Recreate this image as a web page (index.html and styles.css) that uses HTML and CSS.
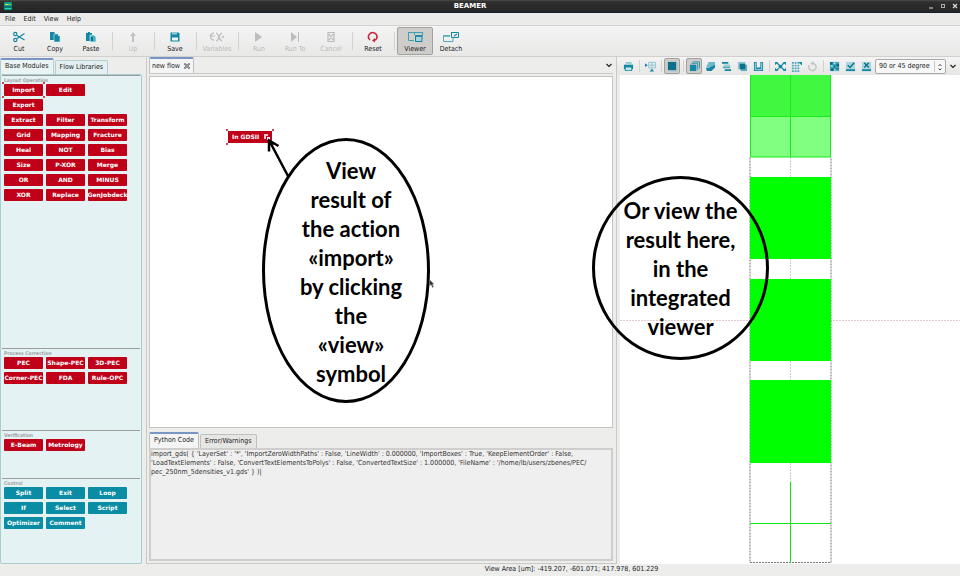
FILE: index.html
```html
<!DOCTYPE html>
<html lang="en">
<head>
<meta charset="utf-8">
<title>BEAMER</title>
<link rel="stylesheet" href="styles.css">
</head>
<body>
<div class="app">
  <header class="titlebar">
    <svg class="logo" viewBox="0 0 8 8"><rect width="8" height="8" rx="1" fill="#0a9a86"/><path d="M1 2h3v1H1z" fill="#e8e23c"/><path d="M4 2h3v1H4z" fill="#7ad04a"/><path d="M0 4.500h8v1H0z" fill="#0b4f5c"/><path d="M1 6h6v1H1z" fill="#2fd0c0"/></svg>
    <h1>BEAMER</h1>
    <div class="winbtns">
      <button aria-label="Minimize"><svg viewBox="0 0 6 6"><path d="M1 5h4" stroke="#ddd" stroke-width="1"/></svg></button>
      <button aria-label="Maximize"><svg viewBox="0 0 6 6"><rect x="1.500" y="1.500" width="3" height="3" fill="none" stroke="#aaa"/></svg></button>
      <button aria-label="Close"><svg viewBox="0 0 6 6"><path d="M1 1l4 4M5 1L1 5" stroke="#ddd" stroke-width="1.200"/></svg></button>
    </div>
  </header>
  <nav class="menubar"><button>File</button><button>Edit</button><button>View</button><button>Help</button></nav>
  <div class="toolbar">
    <button class="tool"><svg viewBox="0 0 12 12" fill="none" stroke="#1387a3" stroke-width="1.200"><path d="M11.500 2.500L4 7.500M11.500 9L4 4.500"/><circle cx="2.300" cy="3" r="1.600"/><circle cx="2.300" cy="9" r="1.600"/></svg>Cut</button>
    <button class="tool"><svg viewBox="0 0 12 12"><path d="M1 1h4l1 1v7H1z" fill="#1387a3"/><path d="M5 3h4l2 2v6H5z" fill="#1387a3" stroke="#d7ecf0" stroke-width=".6"/><path d="M9 3v2h2" fill="#d7ecf0"/></svg>Copy</button>
    <button class="tool"><svg viewBox="0 0 12 12"><path d="M1 2h2V1h2v1h2v8H1z" fill="#1387a3"/><path d="M5 4h4l2 2v5H5z" fill="#4bb4c8" stroke="#e8f4f6" stroke-width=".6"/><path d="M6 6h2v4H6z" fill="#0b6f88"/></svg>Paste</button>
    <span class="sep"></span>
    <button class="tool" disabled><svg viewBox="0 0 12 12"><path d="M6 1l3 4H7v6H5V5H3z" fill="#c2c2c2"/></svg>Up</button>
    <span class="sep"></span>
    <button class="tool"><svg viewBox="0 0 12 12"><path d="M1.500 1.500h8l1 1v8h-9z" fill="#1387a3"/><path d="M3 1.500h5v2H3z" fill="#8ed0dc"/><path d="M3 6.500h6v3H3z" fill="#f0f7f8"/></svg>Save</button>
    <span class="sep"></span>
    <button class="tool" disabled><svg class="wide" viewBox="0 0 16 12" fill="none" stroke="#bbb" stroke-width="1.200"><path d="M5 2a3 3 0 1 0 0 7M1 5h5M7 2c3 0 3 8 6 8M13 2c-3 0-3 8-6 8M13 7l2-2"/></svg>Variables</button>
    <span class="sep"></span>
    <button class="tool" disabled><svg viewBox="0 0 12 12"><path d="M2 1l7 5-7 5z" fill="#bdbdbd"/></svg>Run</button>
    <button class="tool" disabled><svg viewBox="0 0 12 12"><path d="M2 1l6 5-6 5zM9 1h1v10H9z" fill="#bdbdbd"/></svg>Run To</button>
    <button class="tool" disabled><svg viewBox="0 0 12 12" fill="none" stroke="#bbb" stroke-width="1.200"><path d="M3 1.500h6v9H3zM4 3l4 6M8 3L4 9"/></svg>Cancel</button>
    <span class="sep"></span>
    <button class="tool"><svg viewBox="0 0 12 12" fill="none" stroke="#c9253b" stroke-width="1.600"><path d="M3 9A4.200 4.200 0 1 1 9.600 7.500Q9 9 7 9.500"/><path d="M5 9.500l3-2.500v4.500z" fill="#c9253b" stroke="none"/></svg>Reset</button>
    <span class="sep"></span>
    <button class="tool pressed" aria-pressed="true"><svg class="wide" viewBox="0 0 16 12" fill="none" stroke="#3f9fb5"><path d="M1 1.500h14M1.500 1v8.500H7M7.500 1v3M15.500 1v4"/><path d="M8.500 5h6.500v5.500H8.500z" stroke="#11849e" fill="#a9d3dc"/><path d="M8 5h7" stroke="#11849e" stroke-width="1.500"/></svg>Viewer</button>
    <button class="tool"><svg class="wide" viewBox="0 0 16 12" fill="none" stroke="#58a9bc"><path d="M7 4.500H.5v6H10V7"/><path d="M1 5h6" stroke-width="1.500"/><path d="M8.500 1.500h7v5h-7z" stroke="#11849e"/><path d="M8 1.500h7M11 5l3-2" stroke="#11849e" stroke-width="1.200"/></svg>Detach</button>
  </div>

  <main class="main">
    <aside class="sidebar">
      <div class="tabs"><button class="tab active">Base Modules</button><button class="tab">Flow Libraries</button></div>
      <div class="modules">
        <section class="group layout">
          <h2>Layout Operation</h2>
          <div class="grid">
            <button class="mod picked">Import<i></i></button><button class="mod">Edit</button>
            <button class="mod first">Export</button>
            <button class="mod first">Extract</button><button class="mod">Filter</button><button class="mod">Transform</button>
            <button class="mod">Grid</button><button class="mod">Mapping</button><button class="mod">Fracture</button>
            <button class="mod">Heal</button><button class="mod">NOT</button><button class="mod">Bias</button>
            <button class="mod">Size</button><button class="mod">P-XOR</button><button class="mod">Merge</button>
            <button class="mod">OR</button><button class="mod">AND</button><button class="mod">MINUS</button>
            <button class="mod">XOR</button><button class="mod">Replace</button><button class="mod">GenJobdeck</button>
          </div>
        </section>
        <section class="group process">
          <h2>Process Correction</h2>
          <div class="grid">
            <button class="mod">PEC</button><button class="mod">Shape-PEC</button><button class="mod">3D-PEC</button>
            <button class="mod">Corner-PEC</button><button class="mod">FDA</button><button class="mod">Rule-OPC</button>
          </div>
        </section>
        <section class="group verify">
          <h2>Verification</h2>
          <div class="grid"><button class="mod">E-Beam</button><button class="mod">Metrology</button></div>
        </section>
        <section class="group control">
          <h2>Control</h2>
          <div class="grid">
            <button class="mod">Split</button><button class="mod">Exit</button><button class="mod">Loop</button>
            <button class="mod">If</button><button class="mod">Select</button><button class="mod">Script</button>
            <button class="mod">Optimizer</button><button class="mod">Comment</button>
          </div>
        </section>
      </div>
    </aside>

    <section class="center">
      <div class="tabs flowtabs">
        <button class="tab active">new flow <svg class="x" viewBox="0 0 6 6"><path d="M.5.5l5 5M5.500.5l-5 5" stroke="#555" stroke-width="1.600"/><path d="M1 1l4 4M5 1L1 5" stroke="#eee" stroke-width=".5"/></svg></button>
        <button class="more" aria-label="Flow list"><svg viewBox="0 0 8 8"><path d="M1.500 3L4 5.500 6.500 3" fill="none" stroke="#222" stroke-width="1.200"/></svg></button>
      </div>
      <div class="flow">
        <button class="node">In GDSII
          <svg viewBox="0 0 8 8"><path d="M1 1h4v2H3v3H1z" fill="#f7c7cc"/><path d="M4 4h3v3H4z" fill="#fff"/></svg>
          <i></i></button>
        <div class="callout oval"><p>View<br>result of<br>the action<br>«import»<br>by clicking<br>the<br>«view»<br>symbol</p></div>
        <svg class="arrow" viewBox="0 0 24 40" fill="none" stroke="#000" stroke-width="2.500"><path d="M22 38L4 4M3 13.500V2.500L12.500 8"/></svg>
        <svg class="cursor" viewBox="0 0 6 9"><path d="M.5.5v6.500l1.500-1.500 1.500 3 1-.6-1.200-2.700H5z" fill="#333" stroke="#999" stroke-width=".4"/></svg>
      </div>
      <div class="tabs codetabs"><button class="tab active">Python Code</button><button class="tab">Error/Warnings</button></div>
      <textarea class="code" aria-label="Python Code" spellcheck="false">import_gds( { 'LayerSet' : '*', 'ImportZeroWidthPaths' : False, 'LineWidth' : 0.000000, 'ImportBoxes' : True, 'KeepElementOrder' : False,
'LoadTextElements' : False, 'ConvertTextElementsToPolys' : False, 'ConvertedTextSize' : 1.000000, 'FileName' : '/home/lb/users/zbenes/PEC/
pec_250nm_5densities_v1.gds' } )|</textarea>
    </section>

    <section class="viewer">
      <div class="viewbar">
        <button aria-label="Print"><svg viewBox="0 0 12 12"><path d="M3 1h6l1 2H3z" fill="#8cc9d6"/><path d="M1 4h10v5H1z" fill="#1387a3"/><path d="M3 7h6v3H3z" fill="#c5e4ea"/><path d="M2 9h1v1h6V9h1v2H2z" fill="#1387a3"/></svg></button>
        <span class="sep"></span>
        <button aria-label="Grid"><svg viewBox="0 0 12 12" fill="none" stroke="#8cc4d2"><path d="M4 1.500h7.500v6H4zM4 4.500h8M7.500 1v7"/><path d="M0 2.500l3 2-3 2zM5 11.500l2.500-3 2.500 3z" fill="#1387a3" stroke="none"/></svg></button>
        <span class="sep"></span>
        <button class="pressed" aria-label="Fill"><svg viewBox="0 0 12 12"><path d="M1 1h9v9H1z" fill="#0d6f8c"/><path d="M11 2v9H3" fill="none" stroke="#6fb4c6" stroke-dasharray="1 1"/></svg></button>
        <span class="sep"></span>
        <button class="pressed" aria-label="Layers"><svg viewBox="0 0 12 12"><path d="M1 4h7v7H1z" fill="#1387a3"/><path d="M2.500 2.500h7v7M4 1h7.500v7" fill="none" stroke="#2b8fa9"/></svg></button>
        <button aria-label="Stack"><svg viewBox="0 0 12 12"><path d="M4 1h7v3L8 7H1z" fill="#6db9ca"/><path d="M1 8l4-1 6-3v3L7 11H2z" fill="#1387a3"/></svg></button>
        <button aria-label="Align"><svg viewBox="0 0 12 12"><path d="M1 1h7v2H1zM4 9h7v2H4z" fill="#1387a3"/><path d="M3 4h7v1H3zM2 6h8v2H2z" fill="#4ba6bb"/></svg></button>
        <button aria-label="Overlap"><svg viewBox="0 0 12 12"><path d="M1 1h8v8H1z" fill="#8ac5d3"/><path d="M4 4h7v7H4z" fill="#5eafc1"/><path d="M3 3h6v6H3z" fill="#0d6f8c"/></svg></button>
        <button aria-label="Merge"><svg viewBox="0 0 12 12" fill="none"><path d="M1 1h3v6h4V1h3v10H1z" fill="#1387a3"/><path d="M2.500 2v7.500h7V2" stroke="#b4dce4"/></svg></button>
        <span class="sep"></span>
        <button aria-label="Fit"><svg viewBox="0 0 12 12" fill="#1387a3"><path d="M4 4h4v4H4zM0 1h3v1L5 4 4 5 2 3H1v1H0zM12 1H9v1L7 4l1 1 2-2h1v1h1zM0 11h3v-1l2-2-1-1-2 2H1V8H0zM12 11H9v-1L7 8l1-1 2 2h1V8h1z"/></svg></button>
        <button aria-label="Snap"><svg viewBox="0 0 12 12"><path d="M1 2h8M1 5h8M1 8h8M1 11h8" stroke="#4ba6bb" stroke-width="2" stroke-dasharray="2 1"/><path d="M8 1h4v4z" fill="#1387a3"/></svg></button>
        <button aria-label="Refresh" disabled><svg viewBox="0 0 12 12" fill="none" stroke="#c4c4c4" stroke-width="1.600"><path d="M2.500 4.500A4 4 0 1 0 6 2.500"/><path d="M7 0v5L3.500 2.500z" fill="#c4c4c4" stroke="none"/></svg></button>
        <span class="sep"></span>
        <button aria-label="Measure"><svg viewBox="0 0 12 12"><path d="M1 1h10v10H1z" fill="#43a9bd"/><path d="M1 1h3v3H1zM8 3h3v3H8zM2 8h3v3H2zM7 8h4v1H7zM5 5h2v2H5z" fill="#0d6f8c"/><path d="M5 2h2v1H5zM2 5h2v1H2zM6 9h1v2H6z" fill="#e8f4f6"/></svg></button>
        <button aria-label="Accept"><svg viewBox="0 0 12 12"><path d="M1 1h10v10H1z" fill="#abd6df"/><path d="M1 9h10v2H1z" fill="#1387a3"/><path d="M3 4.500L5.500 7 10 2" fill="none" stroke="#0d6f8c" stroke-width="1.500"/></svg></button>
        <button aria-label="Reject"><svg viewBox="0 0 12 12"><path d="M1 1h10v10H1z" fill="#abd6df"/><path d="M1 9h10v2H1z" fill="#1387a3"/><path d="M3.500 2l5 5M8.500 2l-5 5" fill="none" stroke="#0d6f8c" stroke-width="1.500"/></svg></button>
        <div class="angle">
          <select aria-label="Angle"><option>90 or 45 degree</option></select>
          <svg viewBox="0 0 6 10" fill="none" stroke="#444"><path d="M1.500 4L3 2.500 4.500 4M1.500 6.500L3 8l1.500-1.500"/></svg>
        </div>
        <button class="last" aria-label="More"><svg viewBox="0 0 8 8"><path d="M1.500 3L4 5.500 6.500 3" fill="none" stroke="#222" stroke-width="1.200"/></svg></button>
      </div>
      <div class="scene">
        <svg viewBox="620 75 340 488" preserveAspectRatio="xMidYMin meet">
          <path d="M620 320.500h340" stroke="#e2c8d0" stroke-dasharray="2 1"/>
          <path d="M790.500 157v325" stroke="#ccc" stroke-dasharray="2 1"/>
          <path d="M750 157.500V562.500H831V157" fill="none" stroke="#777" stroke-dasharray="2 1"/>
          <path d="M750 75h81v42h-81z" fill="#40f840"/>
          <path d="M750 117h81v40h-81z" fill="#80ff80"/>
          <path d="M750.500 75v82h80V75M750 116.500h81M790.500 75v82" fill="none" stroke="#1de81d"/>
          <path d="M750 177h81v82h-81zM750 279h81v82h-81zM750 380h81v83h-81z" fill="#0f0"/>
          <path d="M790.500 482v81M750 523.500h81" stroke="#0fe60f"/>
        </svg>
      </div>
      <div class="callout round"><p>Or view the<br>result here,<br>in the<br>integrated<br>viewer</p></div>
    </section>
  </main>
  <footer class="status">View Area [um]: -419.207, -601.071; 417.978, 601.229</footer>
</div>
</body>
</html>
```
FILE: styles.css
```css
* { box-sizing: border-box; }
body {
  margin: 0;
  background: #ededec;
  color: #1c1c1c;
  font: 7px/10px "DejaVu Sans Condensed", "DejaVu Sans", sans-serif;
}
button {
  margin: 0;
  padding: 0;
  border: 0;
  background: none;
  color: inherit;
  font: inherit;
}
svg { display: block; }
.app { display: flex; flex-direction: column; height: 100vh; }

/* Window frame */
.titlebar {
  display: flex;
  align-items: center;
  flex: 0 0 13px;
  padding: 0 2px 0 4px;
  background: linear-gradient(#4a4a48, #2e2e2e 2px, #262626);
  border-bottom: 1px solid #16202c;
  color: #fff;
}
.logo { width: 8px; height: 8px; }
.titlebar h1 {
  flex: 1;
  margin: 0;
  text-align: center;
  font: bold 7px/10px "DejaVu Sans", sans-serif;
}
.winbtns { display: flex; gap: 6px; }
.winbtns svg { width: 6px; height: 6px; }
.menubar {
  display: flex;
  gap: 8px;
  flex: 0 0 13px;
  padding: 0 5px;
  background: #ebebea;
  border-bottom: 1px solid #d2d2d0;
}

/* Main toolbar */
.toolbar {
  display: flex;
  flex: 0 0 31px;
  padding: 1px;
  background: linear-gradient(#f5f4f4, #e8e8e7);
  border-bottom: 1px solid #d0d0ce;
}
.tool {
  display: flex;
  flex-direction: column;
  align-items: center;
  gap: 1px;
  width: 36px;
  height: 28px;
  padding-top: 3px;
  border: 1px solid transparent;
  border-radius: 2px;
}
.tool svg { width: 12px; height: 12px; }
.tool .wide { width: 16px; }
.tool:disabled { color: #bbb; }
.tool.pressed, .viewbar .pressed { background: #cfcdca; border: 1px solid #a3a19e; }
.sep {
  flex: 0 0 6px;
  margin: 5px 0;
  background: linear-gradient(#d3d2d1, #d3d2d1) center / 1px 100% no-repeat;
}

/* Tabs */
.tabs { display: flex; align-items: flex-end; gap: 1px; flex: none; height: 17px; }
.tab {
  height: 14px;
  padding: 0 4px 1px;
  border: 1px solid #c0c0be;
  border-bottom: 0;
  border-radius: 2px 2px 0 0;
  background: #e6e6e5;
}
.tab.active { height: 16px; padding-bottom: 2px; background: #f4f4f4; border-top: 2px solid #7796c4; }

.main { display: flex; flex: 1; min-height: 0; }

/* Module palette */
.sidebar { display: flex; flex-direction: column; flex: 0 0 143px; padding-right: 1px; }
.sidebar .tab { background: #e3eff1; border-color: #b3cdd1; }
.sidebar .tab.active { background: #eaf4f5; border-top-color: #7796c4; }
.modules {
  display: flex;
  flex-direction: column;
  flex: 1;
  min-height: 0;
  padding: 0 1px;
  border: 1px solid #a9ccd0;
  border-radius: 2px;
  background: #e5f2f4;
}
.group { padding: 0 2px; border-top: 1px solid #9a9c9e; }
.layout { flex: 275 1 0; }
.process { flex: 82 1 0; }
.verify { flex: 47 1 0; }
.control { flex: 85 1 0; }
.group h2 {
  margin: 0;
  color: #a0a4a6;
  font: bold 5px/8px "DejaVu Sans Condensed", "DejaVu Sans", sans-serif;
}
.grid { display: grid; grid-template-columns: repeat(3, 39px); grid-auto-rows: 12px; gap: 3px; }
.mod {
  display: flex;
  align-items: center;
  justify-content: center;
  border-radius: 1px;
  background: #c00018;
  color: #fff;
  font: bold 6px/12px "DejaVu Sans", sans-serif;
  white-space: nowrap;
  overflow: hidden;
}
.mod.first { grid-column: 1; }
.control .mod { background: #0a8ca5; }
.mod.picked { position: relative; overflow: visible; }
.picked i, .node i {
  position: absolute;
  inset: -2px;
  background:
    linear-gradient(#d0454f, #d0454f) left top / 2px 2px no-repeat,
    linear-gradient(#d0454f, #d0454f) right top / 2px 2px no-repeat,
    linear-gradient(#d0454f, #d0454f) left bottom / 2px 2px no-repeat,
    linear-gradient(#d0454f, #d0454f) right bottom / 2px 2px no-repeat;
}

/* Flow editor */
.center {
  display: flex;
  flex-direction: column;
  flex: 1 1 0;
  min-width: 0;
  margin-left: 3px;
  padding: 0 3px 2px 2px;
  border: solid #c9c9c7;
  border-width: 0 1px 1px;
}
.flowtabs { border-bottom: 1px solid #c9c9c7; }
.flowtabs .tab { display: flex; align-items: center; gap: 4px; padding: 0 3px 0 2px; }
.x { width: 6px; height: 6px; }
.more { margin-left: auto; align-self: center; }
.more svg, .last svg { width: 8px; height: 8px; }
.flow {
  position: relative;
  flex: 352 1 0;
  margin-top: 2px;
  border: 1px solid #c4c4c2;
  background: #fff;
}
.node {
  position: absolute;
  left: 78px;
  top: 54px;
  display: flex;
  align-items: center;
  gap: 4px;
  height: 12px;
  padding: 0 1px 0 4px;
  background: #c00018;
  color: #fff;
  font: bold 6px/12px "DejaVu Sans", sans-serif;
}
.node svg { width: 8px; height: 8px; }
.arrow { position: absolute; left: 116px; top: 61px; width: 24px; height: 40px; }
.cursor { position: absolute; left: 279px; top: 202px; width: 6px; height: 9px; }
.codetabs { height: 20px; }
.code {
  flex: 109 1 0;
  min-height: 0;
  width: 100%;
  margin: 0;
  padding: 0;
  border: 2px solid #cfcecc;
  border-radius: 0;
  background: #f0efef;
  color: #333;
  font: 7px/9px "DejaVu Sans Condensed", "DejaVu Sans", sans-serif;
  resize: none;
  overflow: hidden;
}

/* Layout viewer */
.viewer { position: relative; display: flex; flex-direction: column; flex: 0 0 343px; }
.viewbar {
  display: flex;
  align-items: center;
  flex: none;
  height: 18px;
  padding-left: 3px;
  background: linear-gradient(#f4f4f4, #e6e6e5);
}
.viewbar button {
  display: flex;
  align-items: center;
  justify-content: center;
  flex: 0 0 16px;
  height: 16px;
  border: 1px solid transparent;
  border-radius: 2px;
}
.viewbar button svg { width: 11px; height: 11px; }
.viewbar .sep { align-self: stretch; margin: 3px 0; }
.angle { position: relative; flex: 0 0 71px; margin-left: 1px; }
.angle select {
  appearance: none;
  display: block;
  width: 100%;
  height: 15px;
  padding: 0 3px;
  border: 1px solid #a9a9a7;
  border-radius: 2px;
  background: linear-gradient(#c9c9c7, #c9c9c7) right 10px center / 1px 11px no-repeat, #f7f7f7;
  color: #1c1c1c;
  font: inherit;
}
.angle svg { position: absolute; right: 3px; top: 3px; width: 6px; height: 10px; pointer-events: none; }
.viewbar .last { flex: 1; }
.viewbar .last svg { width: 8px; height: 8px; }
.scene { flex: 1; min-height: 0; margin-left: 3px; background: #fff; }
.scene svg { width: 100%; height: 100%; }

/* Annotations */
.callout {
  position: absolute;
  display: flex;
  align-items: center;
  justify-content: center;
  border: 3px solid #000;
  border-radius: 50%;
  color: #000;
  text-align: center;
  font: bold 22px/29px Lato, "Open Sans", sans-serif;
  font-variant-ligatures: none;
  white-space: nowrap;
}
.callout p { margin: 0; }
.oval { left: 112px; top: 61px; width: 168px; height: 265px; padding: 2px 0 0 10px; }
.round { left: -25px; top: 119px; width: 177px; height: 184px; }

.status { flex: 0 0 12px; padding-left: 183px; text-align: center; }
```
